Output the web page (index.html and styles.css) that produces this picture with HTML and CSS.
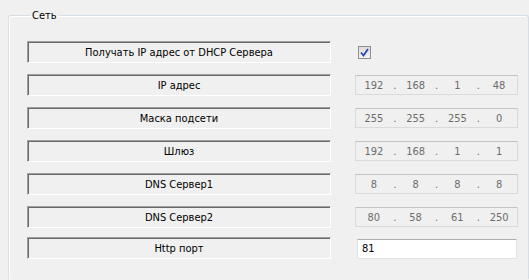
FILE: index.html
```html
<!DOCTYPE html>
<html lang="ru">
<head>
  <meta charset="UTF-8">
  <title>Сеть</title>
  <link rel="stylesheet" href="styles.css">
</head>
<body>
  <fieldset class="group">
    <legend>Сеть</legend>

    <div class="rows">
      <div class="row">
        <div class="label">Получать IP адрес от DHCP Сервера</div>
        <div class="field"><span class="check"><svg width="9" height="9" viewBox="0 0 9 9"><path d="M1 4.5 L3.5 7.5 L8 1" fill="none" stroke="#2a4bb8" stroke-width="1.8"/></svg></span></div>
      </div>

      <div class="row">
        <div class="label">IP адрес</div>
        <div class="ip"><span>192</span><i>.</i><span>168</span><i>.</i><span>1</span><i>.</i><span>48</span></div>
      </div>

      <div class="row">
        <div class="label">Маска подсети</div>
        <div class="ip"><span>255</span><i>.</i><span>255</span><i>.</i><span>255</span><i>.</i><span>0</span></div>
      </div>

      <div class="row">
        <div class="label">Шлюз</div>
        <div class="ip"><span>192</span><i>.</i><span>168</span><i>.</i><span>1</span><i>.</i><span>1</span></div>
      </div>

      <div class="row">
        <div class="label">DNS Сервер1</div>
        <div class="ip"><span>8</span><i>.</i><span>8</span><i>.</i><span>8</span><i>.</i><span>8</span></div>
      </div>

      <div class="row">
        <div class="label">DNS Сервер2</div>
        <div class="ip"><span>80</span><i>.</i><span>58</span><i>.</i><span>61</span><i>.</i><span>250</span></div>
      </div>

      <div class="row last">
        <div class="label">Http порт</div>
        <div class="field"><input type="text" class="port" value="81"></div>
      </div>
    </div>
  </fieldset>
</body>
</html>
```

FILE: styles.css
```css
body {
  margin: 0;
  padding: 9px 0 0 8px;
  background-color: #f0f0f0;
  font-family: "DejaVu Sans Condensed", "DejaVu Sans", sans-serif;
  font-size: 11px;
  color: #000;
  height: 271px;
  overflow: hidden;
}

.group {
  margin: 0;
  padding: 0 10px 0 18px;
  border: 1px solid #d5dfe5;
  border-bottom: none;
  border-radius: 3px 3px 0 0;
  box-shadow: inset 1px 1px #fff;
  height: 270px;
  box-sizing: border-box;
}

.group legend {
  margin-left: 3px;
  padding: 0 2px;
  line-height: 13px;
}

.rows {
  margin-top: 19px;
}

.row {
  display: grid;
  grid-template-columns: 304px 163px;
  column-gap: 24px;
  align-items: center;
  height: 22px;
  margin-bottom: 11px;
}

.row.last {
  margin-top: -2px;
  margin-bottom: 0;
}

.label {
  box-sizing: border-box;
  height: 22px;
  line-height: 19px;
  text-align: center;
  border-style: solid;
  border-width: 1px;
  border-color: #a0a0a0 #fff #fff #a0a0a0;
  box-shadow: inset 1px 1px #696969;
  padding-top: 1px;
}

.field {
  display: flex;
  align-items: center;
}

.check {
  box-sizing: border-box;
  width: 13px;
  height: 13px;
  margin-left: 3px;
  border: 1px solid #8e8f8f;
  background: linear-gradient(#dcdcdc, #f4f4f4);
  display: flex;
  align-items: center;
  justify-content: center;
}

.ip {
  box-sizing: border-box;
  height: 20px;
  display: grid;
  grid-template-columns: 1fr 6px 1fr 6px 1fr 6px 1fr;
  align-items: center;
  border: 1px solid #dadada;
  border-top-color: #c4c4c4;
  color: #6d6d6d;
  text-align: center;
}

.ip i {
  font-style: normal;
}

.port {
  box-sizing: border-box;
  width: 160px;
  height: 20px;
  margin: 1px 0 0 2px;
  padding: 0 4px;
  border: 1px solid #e3e3e3;
  border-top-color: #abadb3;
  background: #fff;
  font-family: "DejaVu Sans Condensed", "DejaVu Sans", sans-serif;
  font-size: 11px;
  color: #000;
  outline: none;
}
```
